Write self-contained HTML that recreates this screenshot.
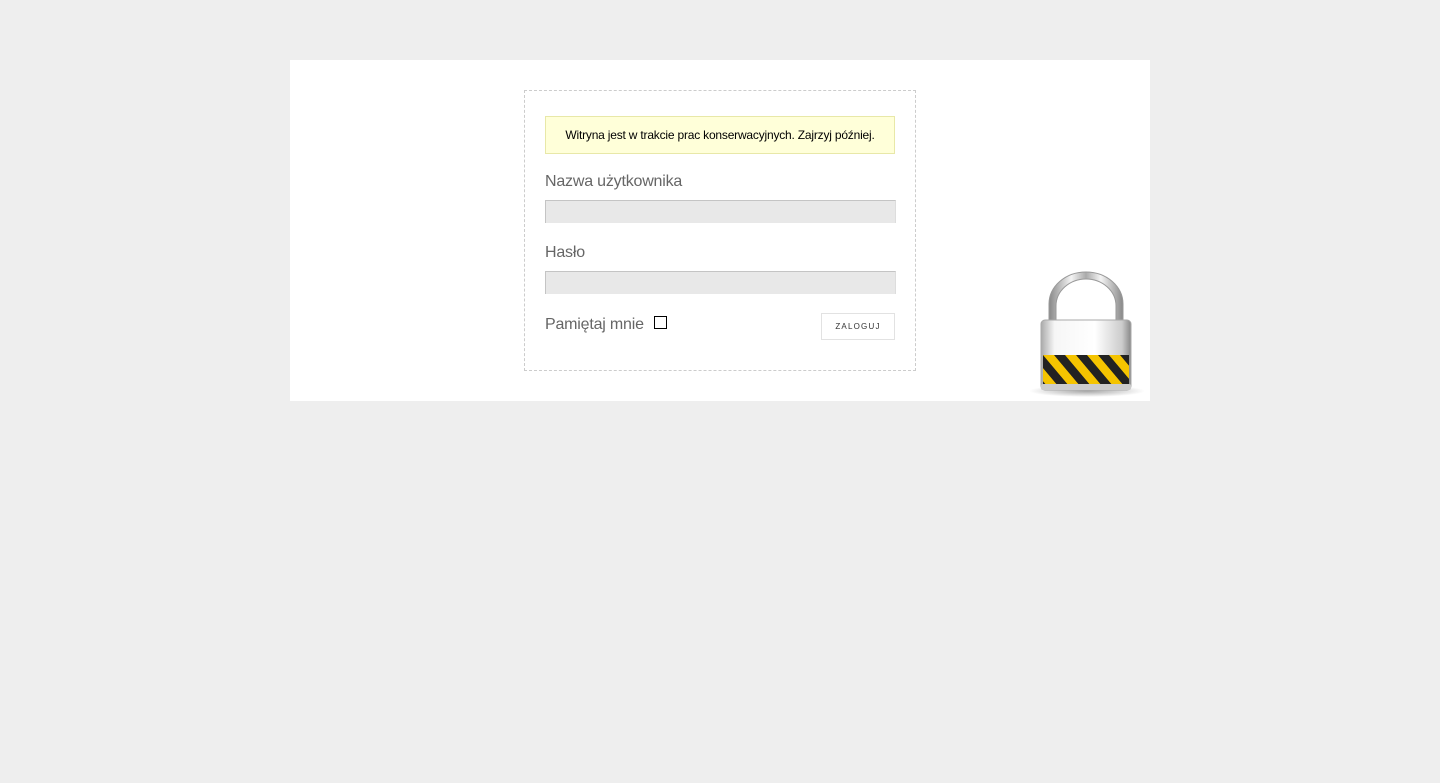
<!DOCTYPE html>
<html><head><meta charset="utf-8"><style>
body{margin:0;background:#eee;font-family:"Liberation Sans",Arial,sans-serif;width:1440px;height:783px;position:relative;overflow:hidden}
.panel{position:absolute;left:290px;top:60px;width:860px;height:341px;background:#fff}
.box{position:absolute;left:524px;top:90px;width:390px;height:279px;border:1px dashed #ccc}
.msg{position:absolute;left:545px;top:116px;width:348px;height:36px;background:#ffffd9;border:1px solid #e8e8a8;font-size:12px;color:#000;text-align:center;line-height:36px;letter-spacing:-0.2px}
.lbl{position:absolute;left:545px;font-size:16px;color:#666;letter-spacing:-0.2px}
.inp{position:absolute;left:545px;width:349px;height:22px;background:#e8e8e8;border:1px solid #c4c4c4;border-bottom:none;border-right:1px solid #ddd}
.cb{position:absolute;left:654px;top:316px;width:11px;height:11px;border:1px solid #000}
.btn{position:absolute;left:821px;top:313px;width:72px;height:25px;border:1px solid #e2e2e2;font-size:8px;letter-spacing:1.2px;color:#333;text-align:center;line-height:26px}
</style></head><body>
<div class="panel"></div>
<div class="box"></div>
<div class="msg">Witryna jest w trakcie prac konserwacyjnych. Zajrzyj później.</div>
<div class="lbl" style="top:173px">Nazwa użytkownika</div>
<div class="inp" style="top:200px"></div>
<div class="lbl" style="top:244px">Hasło</div>
<div class="inp" style="top:271px"></div>
<div class="lbl" style="top:316px">Pamiętaj mnie</div>
<div class="cb"></div>
<div class="btn">ZALOGUJ</div>
<svg style="position:absolute;left:1025px;top:268px" width="125" height="133" viewBox="0 0 125 133">
<defs>
<linearGradient id="sh" x1="0" x2="1"><stop offset="0" stop-color="#888"/><stop offset=".3" stop-color="#f4f4f4"/><stop offset=".5" stop-color="#aaa"/><stop offset=".7" stop-color="#f4f4f4"/><stop offset="1" stop-color="#888"/></linearGradient>
<linearGradient id="bd" x1="0" x2="1"><stop offset="0" stop-color="#aaa"/><stop offset=".15" stop-color="#f6f6f6"/><stop offset=".6" stop-color="#fff"/><stop offset=".9" stop-color="#ccc"/><stop offset="1" stop-color="#888"/></linearGradient>
<pattern id="st" width="22" height="40" patternUnits="userSpaceOnUse" patternTransform="skewX(40)"><rect width="22" height="40" fill="#f5c400"/><rect width="11" height="40" fill="#222"/></pattern>
<radialGradient id="sd"><stop offset="0" stop-color="#000" stop-opacity=".35"/><stop offset="1" stop-color="#000" stop-opacity="0"/></radialGradient>
</defs>
<ellipse cx="62" cy="123" rx="58" ry="6" fill="url(#sd)"/>
<path d="M24 60 V36 A37 32 0 0 1 98 36 V60 H91 V38 A30 27 0 0 0 31 38 V60 Z" fill="url(#sh)" stroke="#999" stroke-width="1"/>
<rect x="16" y="52" width="90" height="70" rx="4" fill="url(#bd)" stroke="#aaa"/>
<rect x="18" y="87" width="86" height="30" fill="url(#st)"/>
<rect x="16" y="116" width="90" height="6" rx="2" fill="#ccc"/>
</svg>
</body></html>
